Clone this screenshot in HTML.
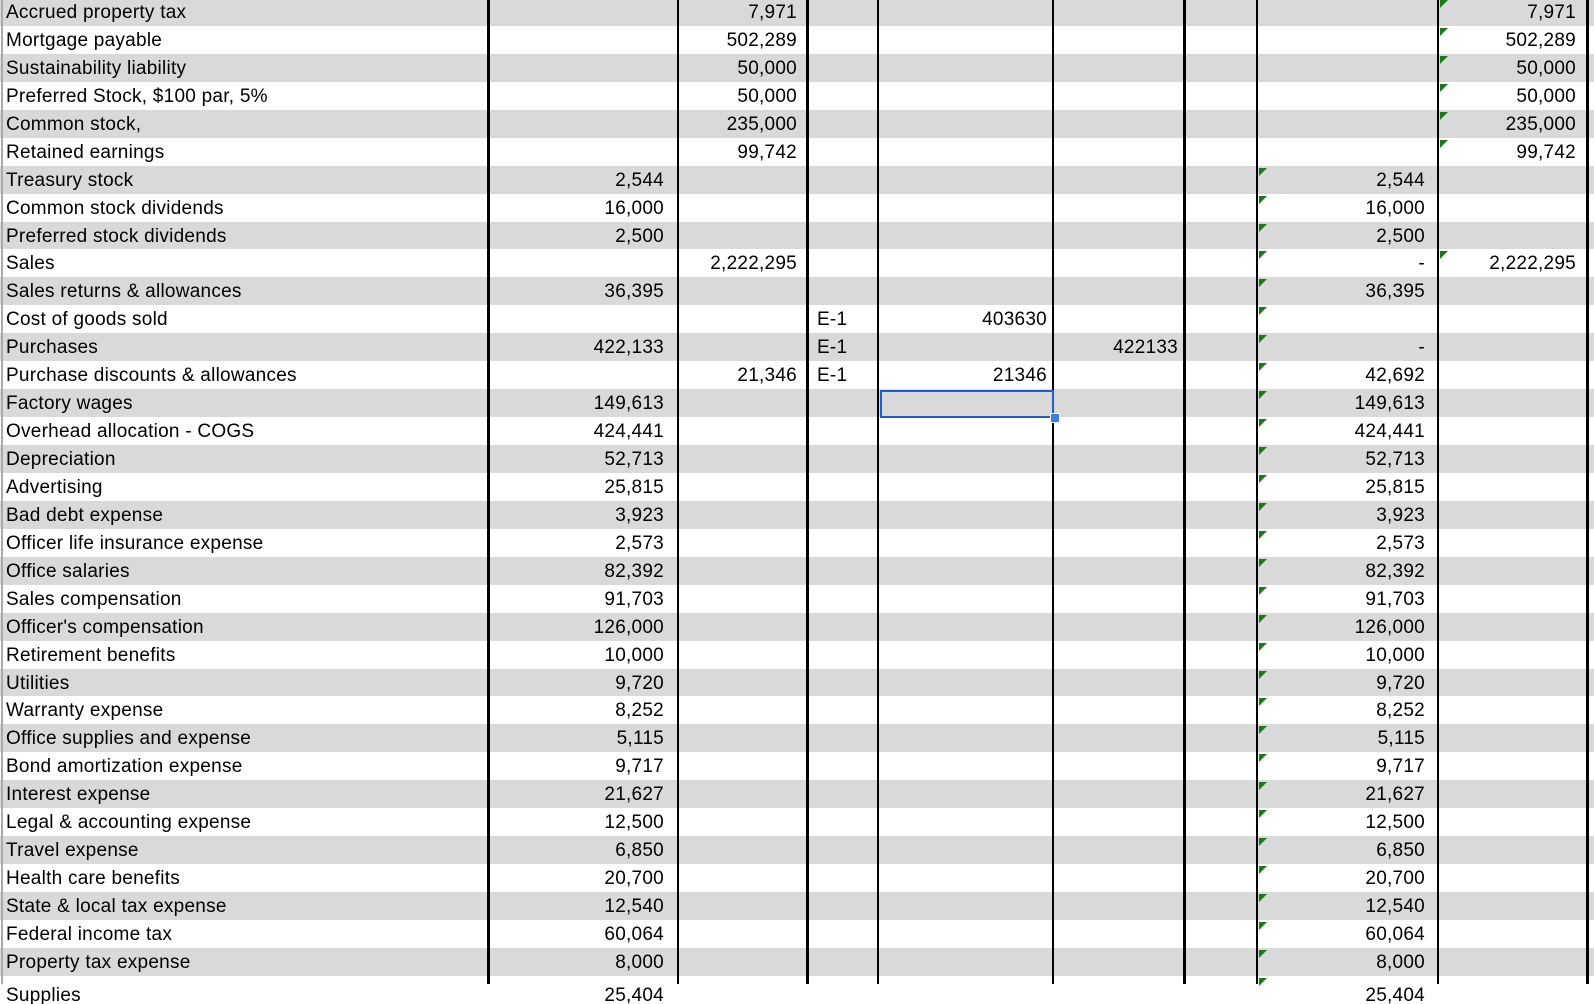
<!DOCTYPE html>
<html><head><meta charset="utf-8"><style>
html,body{margin:0;padding:0;background:#fff;}
body{width:1594px;height:984px;overflow:hidden;position:relative;font-family:"Liberation Sans",Arial,sans-serif;font-size:19px;letter-spacing:0.25px;color:#000;}
#g{position:absolute;left:0;top:-2px;width:1594px;}
.r{display:flex;height:27.94px;line-height:29px;white-space:nowrap;}
.r:nth-child(odd){background:#d9d9d9;}
.r>div{position:relative;box-sizing:border-box;overflow:hidden;}
.a{width:489px;padding-left:6px;}
.b{width:190px;text-align:right;padding-right:15px;}
.c{width:132px;text-align:right;padding-right:14px;}
.d{width:70px;padding-left:6px;}
.e{width:175px;text-align:right;padding-right:9px;}
.f{width:131px;text-align:right;padding-right:9px;}
.gg{width:70px;}
.h{width:181px;text-align:right;padding-right:13px;}
.i{width:150px;text-align:right;padding-right:12px;}
.t::before{content:"";position:absolute;left:2px;top:2px;border-top:8px solid #1a7a1a;border-right:8px solid transparent;}
.v{position:absolute;top:0;height:984px;background:#000;}
#sel{position:absolute;left:880px;top:390px;width:174px;height:28px;border:2px solid #1a5fcc;box-sizing:border-box;}
#hd{position:absolute;left:1050px;top:413px;width:8px;height:8px;background:#3d7ee0;border:1px solid #fff;}
</style></head><body>
<div id="g">
<div class="r"><div class="a">Accrued property tax</div><div class="b"></div><div class="c">7,971</div><div class="d"></div><div class="e"></div><div class="f"></div><div class="gg"></div><div class="h"></div><div class="i t">7,971</div></div>
<div class="r"><div class="a">Mortgage payable</div><div class="b"></div><div class="c">502,289</div><div class="d"></div><div class="e"></div><div class="f"></div><div class="gg"></div><div class="h"></div><div class="i t">502,289</div></div>
<div class="r"><div class="a">Sustainability liability</div><div class="b"></div><div class="c">50,000</div><div class="d"></div><div class="e"></div><div class="f"></div><div class="gg"></div><div class="h"></div><div class="i t">50,000</div></div>
<div class="r"><div class="a">Preferred Stock, $100 par, 5%</div><div class="b"></div><div class="c">50,000</div><div class="d"></div><div class="e"></div><div class="f"></div><div class="gg"></div><div class="h"></div><div class="i t">50,000</div></div>
<div class="r"><div class="a">Common stock,</div><div class="b"></div><div class="c">235,000</div><div class="d"></div><div class="e"></div><div class="f"></div><div class="gg"></div><div class="h"></div><div class="i t">235,000</div></div>
<div class="r"><div class="a">Retained earnings</div><div class="b"></div><div class="c">99,742</div><div class="d"></div><div class="e"></div><div class="f"></div><div class="gg"></div><div class="h"></div><div class="i t">99,742</div></div>
<div class="r"><div class="a">Treasury stock</div><div class="b">2,544</div><div class="c"></div><div class="d"></div><div class="e"></div><div class="f"></div><div class="gg"></div><div class="h t">2,544</div><div class="i"></div></div>
<div class="r"><div class="a">Common stock dividends</div><div class="b">16,000</div><div class="c"></div><div class="d"></div><div class="e"></div><div class="f"></div><div class="gg"></div><div class="h t">16,000</div><div class="i"></div></div>
<div class="r"><div class="a">Preferred stock dividends</div><div class="b">2,500</div><div class="c"></div><div class="d"></div><div class="e"></div><div class="f"></div><div class="gg"></div><div class="h t">2,500</div><div class="i"></div></div>
<div class="r"><div class="a">Sales</div><div class="b"></div><div class="c">2,222,295</div><div class="d"></div><div class="e"></div><div class="f"></div><div class="gg"></div><div class="h t">-</div><div class="i t">2,222,295</div></div>
<div class="r"><div class="a">Sales returns &amp; allowances</div><div class="b">36,395</div><div class="c"></div><div class="d"></div><div class="e"></div><div class="f"></div><div class="gg"></div><div class="h t">36,395</div><div class="i"></div></div>
<div class="r"><div class="a">Cost of goods sold</div><div class="b"></div><div class="c"></div><div class="d">E-1</div><div class="e">403630</div><div class="f"></div><div class="gg"></div><div class="h t"></div><div class="i"></div></div>
<div class="r"><div class="a">Purchases</div><div class="b">422,133</div><div class="c"></div><div class="d">E-1</div><div class="e"></div><div class="f">422133</div><div class="gg"></div><div class="h t">-</div><div class="i"></div></div>
<div class="r"><div class="a">Purchase discounts &amp; allowances</div><div class="b"></div><div class="c">21,346</div><div class="d">E-1</div><div class="e">21346</div><div class="f"></div><div class="gg"></div><div class="h t">42,692</div><div class="i"></div></div>
<div class="r"><div class="a">Factory wages</div><div class="b">149,613</div><div class="c"></div><div class="d"></div><div class="e"></div><div class="f"></div><div class="gg"></div><div class="h t">149,613</div><div class="i"></div></div>
<div class="r"><div class="a">Overhead allocation - COGS</div><div class="b">424,441</div><div class="c"></div><div class="d"></div><div class="e"></div><div class="f"></div><div class="gg"></div><div class="h t">424,441</div><div class="i"></div></div>
<div class="r"><div class="a">Depreciation</div><div class="b">52,713</div><div class="c"></div><div class="d"></div><div class="e"></div><div class="f"></div><div class="gg"></div><div class="h t">52,713</div><div class="i"></div></div>
<div class="r"><div class="a">Advertising</div><div class="b">25,815</div><div class="c"></div><div class="d"></div><div class="e"></div><div class="f"></div><div class="gg"></div><div class="h t">25,815</div><div class="i"></div></div>
<div class="r"><div class="a">Bad debt expense</div><div class="b">3,923</div><div class="c"></div><div class="d"></div><div class="e"></div><div class="f"></div><div class="gg"></div><div class="h t">3,923</div><div class="i"></div></div>
<div class="r"><div class="a">Officer life insurance expense</div><div class="b">2,573</div><div class="c"></div><div class="d"></div><div class="e"></div><div class="f"></div><div class="gg"></div><div class="h t">2,573</div><div class="i"></div></div>
<div class="r"><div class="a">Office salaries</div><div class="b">82,392</div><div class="c"></div><div class="d"></div><div class="e"></div><div class="f"></div><div class="gg"></div><div class="h t">82,392</div><div class="i"></div></div>
<div class="r"><div class="a">Sales compensation</div><div class="b">91,703</div><div class="c"></div><div class="d"></div><div class="e"></div><div class="f"></div><div class="gg"></div><div class="h t">91,703</div><div class="i"></div></div>
<div class="r"><div class="a">Officer's compensation</div><div class="b">126,000</div><div class="c"></div><div class="d"></div><div class="e"></div><div class="f"></div><div class="gg"></div><div class="h t">126,000</div><div class="i"></div></div>
<div class="r"><div class="a">Retirement benefits</div><div class="b">10,000</div><div class="c"></div><div class="d"></div><div class="e"></div><div class="f"></div><div class="gg"></div><div class="h t">10,000</div><div class="i"></div></div>
<div class="r"><div class="a">Utilities</div><div class="b">9,720</div><div class="c"></div><div class="d"></div><div class="e"></div><div class="f"></div><div class="gg"></div><div class="h t">9,720</div><div class="i"></div></div>
<div class="r"><div class="a">Warranty expense</div><div class="b">8,252</div><div class="c"></div><div class="d"></div><div class="e"></div><div class="f"></div><div class="gg"></div><div class="h t">8,252</div><div class="i"></div></div>
<div class="r"><div class="a">Office supplies and expense</div><div class="b">5,115</div><div class="c"></div><div class="d"></div><div class="e"></div><div class="f"></div><div class="gg"></div><div class="h t">5,115</div><div class="i"></div></div>
<div class="r"><div class="a">Bond amortization expense</div><div class="b">9,717</div><div class="c"></div><div class="d"></div><div class="e"></div><div class="f"></div><div class="gg"></div><div class="h t">9,717</div><div class="i"></div></div>
<div class="r"><div class="a">Interest expense</div><div class="b">21,627</div><div class="c"></div><div class="d"></div><div class="e"></div><div class="f"></div><div class="gg"></div><div class="h t">21,627</div><div class="i"></div></div>
<div class="r"><div class="a">Legal &amp; accounting expense</div><div class="b">12,500</div><div class="c"></div><div class="d"></div><div class="e"></div><div class="f"></div><div class="gg"></div><div class="h t">12,500</div><div class="i"></div></div>
<div class="r"><div class="a">Travel expense</div><div class="b">6,850</div><div class="c"></div><div class="d"></div><div class="e"></div><div class="f"></div><div class="gg"></div><div class="h t">6,850</div><div class="i"></div></div>
<div class="r"><div class="a">Health care benefits</div><div class="b">20,700</div><div class="c"></div><div class="d"></div><div class="e"></div><div class="f"></div><div class="gg"></div><div class="h t">20,700</div><div class="i"></div></div>
<div class="r"><div class="a">State &amp; local tax expense</div><div class="b">12,540</div><div class="c"></div><div class="d"></div><div class="e"></div><div class="f"></div><div class="gg"></div><div class="h t">12,540</div><div class="i"></div></div>
<div class="r"><div class="a">Federal income tax</div><div class="b">60,064</div><div class="c"></div><div class="d"></div><div class="e"></div><div class="f"></div><div class="gg"></div><div class="h t">60,064</div><div class="i"></div></div>
<div class="r"><div class="a">Property tax expense</div><div class="b">8,000</div><div class="c"></div><div class="d"></div><div class="e"></div><div class="f"></div><div class="gg"></div><div class="h t">8,000</div><div class="i"></div></div>
<div class="r" style="line-height:40px"><div class="a">Supplies</div><div class="b">25,404</div><div class="c"></div><div class="d"></div><div class="e"></div><div class="f"></div><div class="gg"></div><div class="h t">25,404</div><div class="i"></div></div>
</div>
<div class="v" style="left:1px;width:2px;background:#aaa"></div>
<div class="v" style="left:487px;width:3px"></div>
<div class="v" style="left:677px;width:2px"></div>
<div class="v" style="left:806px;width:3px"></div>
<div class="v" style="left:877px;width:2px"></div>
<div class="v" style="left:1052px;width:2px"></div>
<div class="v" style="left:1183px;width:3px"></div>
<div class="v" style="left:1256px;width:2px"></div>
<div class="v" style="left:1437px;width:2px"></div>
<div class="v" style="left:1586px;width:3px"></div>
<div id="sel"></div><div id="hd"></div>
</body></html>
